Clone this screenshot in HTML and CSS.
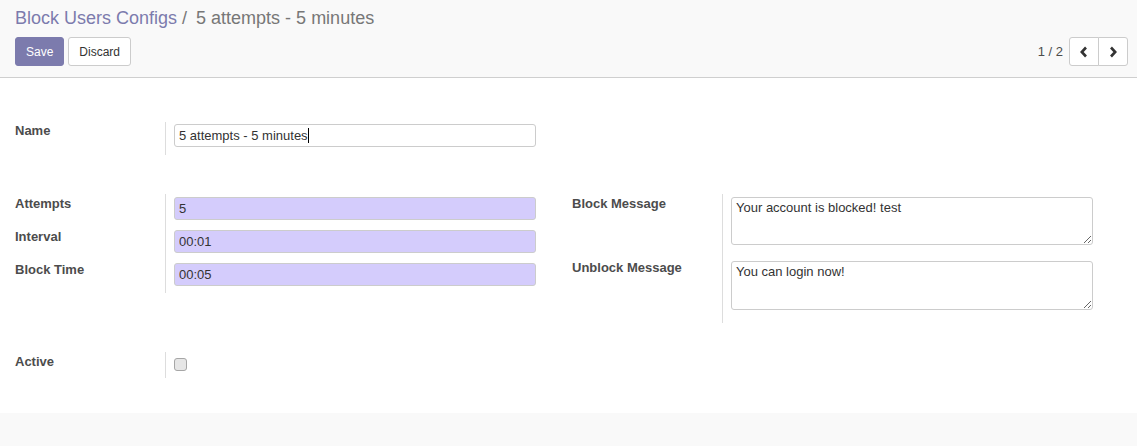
FILE: index.html
```html
<!DOCTYPE html>
<html>
<head>
<meta charset="utf-8">
<link rel="stylesheet" href="styles.css">
</head>
<body>
<div class="control-panel">
  <div class="breadcrumb">
    <a class="crumb-link">Block Users Configs</a><span class="crumb-sep">/</span><span class="crumb-current">5 attempts - 5 minutes</span>
  </div>
  <div class="cp-bottom">
    <div class="buttons">
      <button class="btn btn-primary">Save</button>
      <button class="btn btn-default">Discard</button>
    </div>
    <div class="pager">
      <span class="pager-value">1 / 2</span>
      <div class="btn-group">
        <button class="btn btn-default pager-btn"><svg width="10" height="12" viewBox="0 0 10 12"><path d="M7 1.5 L2.8 6 L7 10.5" fill="none" stroke="#333" stroke-width="2.6"/></svg></button>
        <button class="btn btn-default pager-btn"><svg width="10" height="12" viewBox="0 0 10 12"><path d="M3 1.5 L7.2 6 L3 10.5" fill="none" stroke="#333" stroke-width="2.6"/></svg></button>
      </div>
    </div>
  </div>
</div>

<div class="sheet">
  <div class="group group-name">
    <label class="label">Name</label>
    <div class="cell cell-name"><div class="input"><span>5 attempts - 5 minutes</span><span class="caret"></span></div></div>
  </div>

  <div class="two-col">
    <div class="group">
      <label class="label">Attempts</label>
      <div class="cell"><input class="input required" value="5"></div>
      <label class="label">Interval</label>
      <div class="cell"><input class="input required" value="00:01"></div>
      <label class="label">Block Time</label>
      <div class="cell"><input class="input required" value="00:05"></div>
    </div>
    <div class="group">
      <label class="label">Block Message</label>
      <div class="cell cell-text"><textarea class="textarea first">Your account is blocked! test</textarea></div>
      <label class="label">Unblock Message</label>
      <div class="cell cell-text last"><textarea class="textarea">You can login now!</textarea></div>
    </div>
  </div>

  <div class="group group-active">
    <label class="label">Active</label>
    <div class="cell cell-check"><span class="checkbox"></span></div>
  </div>
</div>
</body>
</html>
```

FILE: styles.css
```css
* { box-sizing: border-box; }
body {
  margin: 0;
  background: #f9f9f9;
  font-family: "Liberation Sans", Arial, sans-serif;
  font-size: 13px;
  color: #4c4c4c;
}
.control-panel {
  background: #f9f9f9;
  border-bottom: 1px solid #cfcfcf;
  padding: 8px 9px 11px 15px;
  height: 78px;
}
.breadcrumb {
  font-size: 18px;
  line-height: 20px;
  white-space: nowrap;
}
.crumb-link { color: #7c7bad; }
.crumb-sep { color: #777; padding: 0 9px 0 5px; }
.crumb-current { color: #777; }
.cp-bottom {
  margin-top: 9px;
  display: flex;
  justify-content: space-between;
  align-items: center;
}
.buttons { display: flex; gap: 4px; }
.btn {
  height: 29px;
  font-family: "Liberation Sans", Arial, sans-serif;
  font-size: 12px;
  padding: 0 10px;
  border-radius: 3px;
  border: 1px solid #ccc;
  cursor: pointer;
}
.btn-primary { background: #7c7bad; border-color: #7c7bad; color: #fff; }
.btn-default { background: #fff; color: #333; }
.pager { display: flex; align-items: center; gap: 6px; }
.pager-value { font-size: 13px; color: #4c4c4c; }
.btn-group { display: flex; }
.pager-btn {
  width: 30px;
  padding: 0;
  display: flex;
  align-items: center;
  justify-content: center;
}
.pager-btn:first-child { border-radius: 3px 0 0 3px; }
.pager-btn:last-child { border-radius: 0 3px 3px 0; margin-left: -1px; }
.sheet {
  background: #fff;
  padding: 44px 15px 35px;
}
.group {
  display: grid;
  grid-template-columns: 150px 371px;
  align-content: start;
}
.label {
  font-weight: bold;
  color: #4c4c4c;
  line-height: 16px;
  padding-top: 2px;
}
.group-name .label { padding-top: 1px; }
.cell {
  border-left: 1px solid #ddd;
  padding: 3px 0 7px 8px;
}
.cell-name { padding: 2px 0 8px 8px; }
.cell-text { padding: 3px 0 13px 8px; }
.cell-check { padding: 6px 0 7px 8px; }
.input {
  display: flex;
  align-items: center;
  width: 362px;
  height: 23px;
  border: 1px solid #ccc;
  border-radius: 3px;
  padding: 0 4px;
  font-family: "Liberation Sans", Arial, sans-serif;
  font-size: 13px;
  color: #333;
  background: #fff;
  outline: none;
}
.required { background: #d4ccfc; }
.caret {
  display: inline-block;
  width: 1px;
  height: 15px;
  background: #000;
}
.textarea {
  display: block;
  width: 362px;
  height: 49px;
  border: 1px solid #ccc;
  border-radius: 3px;
  padding: 2px 4px;
  font-family: "Liberation Sans", Arial, sans-serif;
  font-size: 13px;
  line-height: 16px;
  color: #333;
  resize: vertical;
}
.textarea.first { height: 48px; }
.two-col {
  display: grid;
  grid-template-columns: 557px 1fr;
  align-items: start;
  margin-top: 39px;
}
.group-active { margin-top: 29px; }
.checkbox {
  display: block;
  width: 13px;
  height: 13px;
  border: 1px solid #a6a6a6;
  border-radius: 3px;
  background: #e6e6e6;
}
```
